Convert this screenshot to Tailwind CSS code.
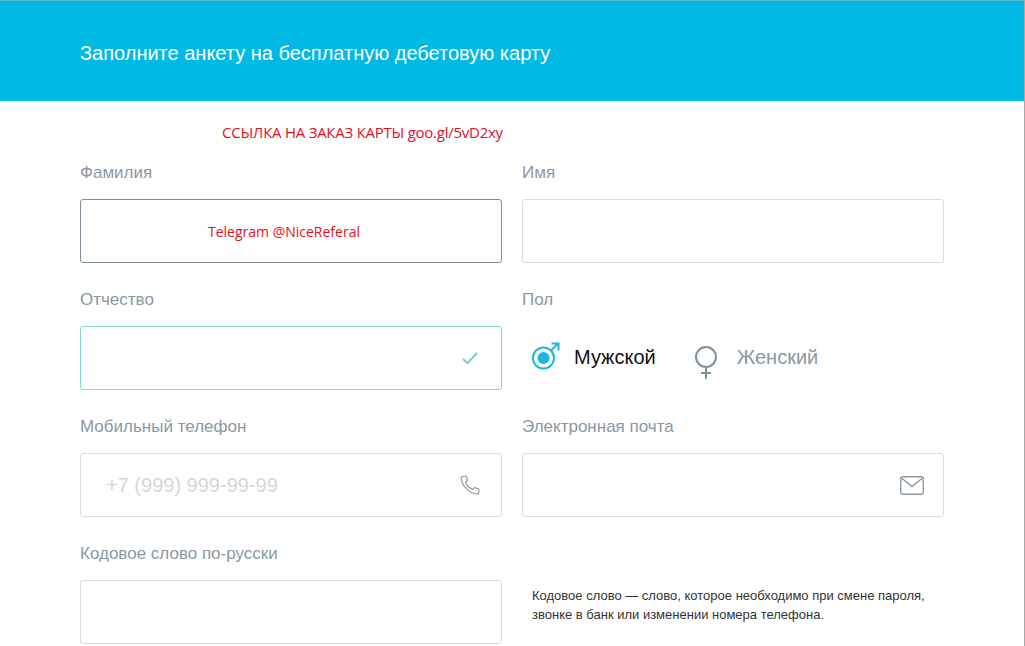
<!DOCTYPE html>
<html lang="ru">
  <head>
    <meta charset="UTF-8" />
    <title>Анкета на дебетовую карту</title>
    <script src="https://cdn.jsdelivr.net/npm/@tailwindcss/browser@4"></script>
  </head>

  <body class="h-[646px] overflow-hidden bg-white font-['Liberation_Sans',sans-serif]">
    <div class="h-[646px] overflow-hidden border-r border-r-[#a9a9a9]">
      <header class="flex h-[101px] items-center border-t border-t-[#5fb4cf] bg-[#00bae5] pl-20 pt-[4px]">
        <h1 class="text-[20px] text-white">Заполните анкету на бесплатную дебетовую карту</h1>
      </header>

      <p class="h-[58px] pl-[222px] pt-[21px] font-['Open_Sans',sans-serif] text-[15px] leading-5 tracking-[-0.25px] text-[#e2101c]">
        ССЫЛКА НА ЗАКАЗ КАРТЫ goo.gl/5vD2xy
      </p>

      <form class="ml-20 grid w-[864px] grid-cols-2 gap-x-5 text-[#8a98a3]">
        <div class="h-[127px]">
          <label class="block h-[40px] pt-[4px] text-[17px] leading-[20px]">Фамилия</label>
          <div class="flex h-[64px] items-center rounded-[3px] border border-[#7d8f99] pl-[127px]">
            <span class="font-['Open_Sans',sans-serif] text-[14px] text-[#e2101c]">Telegram @NiceReferal</span>
          </div>
        </div>

        <div class="h-[127px]">
          <label class="block h-[40px] pt-[4px] text-[17px] leading-[20px]">Имя</label>
          <div class="h-[64px] rounded-[3px] border border-[#d8dcdf]"></div>
        </div>

        <div class="h-[127px]">
          <label class="block h-[40px] pt-[4px] text-[17px] leading-[20px]">Отчество</label>
          <div class="flex h-[64px] items-center justify-end rounded-[3px] border border-[#85d6cf] pr-[23px]">
            <svg width="16" height="13" viewBox="0 0 16 13" fill="none" stroke="#6fd0c5" stroke-width="2">
              <path d="M1 7 L5.5 11.2 L15 1" />
            </svg>
          </div>
        </div>

        <div class="h-[127px]">
          <label class="block h-[40px] pt-[4px] text-[17px] leading-[20px]">Пол</label>
          <div class="flex h-[64px] items-center pl-[10px]">
            <svg class="mb-[5px]" width="28" height="28" viewBox="0 0 28 28" fill="none">
              <circle cx="11.5" cy="16" r="10.5" stroke="#1cb7dd" stroke-width="2" />
              <circle cx="11.5" cy="16" r="6" fill="#1cb7dd" />
              <path d="M19 8.5 L26 1.5 M19.5 1.5 H26.5 V8.5" stroke="#1cb7dd" stroke-width="2" />
            </svg>
            <span class="mb-[2px] ml-[14px] text-[20px] text-[#111]">Мужской</span>
            <svg class="ml-[38px] mt-[12px]" width="24" height="36" viewBox="0 0 24 36" fill="none" stroke="#7d919d" stroke-width="2">
              <circle cx="12" cy="11" r="10" />
              <path d="M12 21 V33 M7 27 H17" />
            </svg>
            <span class="mb-[2px] ml-[19px] text-[20px] text-[#8a98a3]">Женский</span>
          </div>
        </div>

        <div class="h-[127px]">
          <label class="block h-[40px] pt-[4px] text-[17px] leading-[20px]">Мобильный телефон</label>
          <div class="flex h-[64px] items-center justify-between rounded-[3px] border border-[#d8dcdf] pl-[25px] pr-[21px]">
            <span class="text-[20px] text-[#d3d7db]">+7 (999) 999-99-99</span>
            <svg width="20" height="20" viewBox="0 0 20 20" fill="none" stroke="#8f9aa2" stroke-width="1.2" stroke-linejoin="round">
              <path d="M1 2 L6 1 L7.5 5.5 L5.5 7 C6.5 10 9.5 13 13 14.5 L14.5 12.5 L19 14 L18.5 19 C9.5 19 1.5 11 1 2 Z" />
            </svg>
          </div>
        </div>

        <div class="h-[127px]">
          <label class="block h-[40px] pt-[4px] text-[17px] leading-[20px]">Электронная почта</label>
          <div class="flex h-[64px] items-center justify-end rounded-[3px] border border-[#d8dcdf] pr-[19px]">
            <svg width="24" height="19" viewBox="0 0 24 19" fill="none" stroke="#8f9aa2" stroke-width="1.4">
              <rect x="0.7" y="0.7" width="22.6" height="17.6" rx="2" />
              <path d="M1.5 2 L12 10.5 L22.5 2" />
            </svg>
          </div>
        </div>

        <div class="h-[127px]">
          <label class="block h-[40px] pt-[4px] text-[17px] leading-[20px]">Кодовое слово по-русски</label>
          <div class="h-[64px] rounded-[3px] border border-[#d8dcdf]"></div>
        </div>

        <div class="h-[127px] pl-[10px] pt-[46px] text-[13px] leading-[19px] text-[#333]">
          Кодовое слово — слово, которое необходимо при смене пароля,<br />
          звонке в банк или изменении номера телефона.
        </div>
      </form>
    </div>
  </body>
</html>
